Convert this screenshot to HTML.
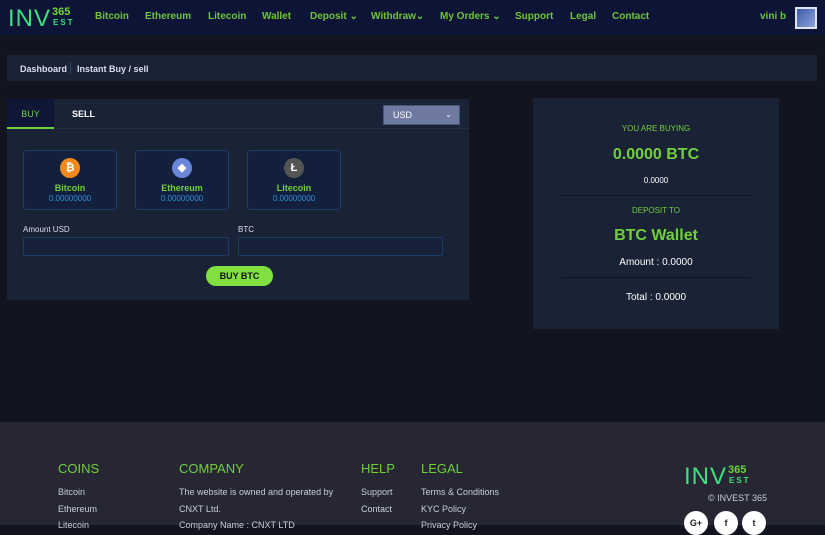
<!DOCTYPE html>
<html><head><meta charset="utf-8"><style>
*{box-sizing:border-box;margin:0;padding:0}
body{width:825px;height:525px;overflow:hidden;background:#12141f;font-family:"Liberation Sans",sans-serif;color:#fff;position:relative}
.g{color:#72cf3c}
.hdr{position:absolute;left:0;top:0;width:825px;height:35px;background:#0e1436}
.logo{position:absolute;left:8px;top:4px;height:26px}
.logo .i{font-size:24px;letter-spacing:1px;color:#3de07c;font-weight:normal;position:absolute;left:0;top:1px}
.logo .n{position:absolute;left:44px;top:3px;font-size:11px;font-weight:bold;color:#6fd53a;line-height:10px}
.logo .e{position:absolute;left:45px;top:14px;font-size:8px;font-weight:bold;color:#3de07c;letter-spacing:2px}
.nav{position:absolute;top:11px;font-size:10px;font-weight:bold;color:#6fc43e}
.av{position:absolute;left:795px;top:7px;width:22px;height:22px;border:2px solid #dfe3f0;background:linear-gradient(135deg,#3d5aa8,#8aa2d8)}
.bc{position:absolute;left:7px;top:55px;width:810px;height:26px;background:#1a2236;font-size:9px;font-weight:bold;color:#dde}
.panel{position:absolute;left:7px;top:99px;width:462px;height:201px;background:#1a2236}
.tabs{height:30px;border-bottom:1px solid #232d48;position:relative}
.buy{position:absolute;left:0;top:0;width:47px;height:30px;background:#0f1636;border-bottom:2px solid #6fcf3a;color:#72cf3c;font-size:9px;text-align:center;line-height:30px}
.sell{position:absolute;left:65px;top:0;font-size:9px;line-height:30px;font-weight:bold}
.usd{position:absolute;left:376px;top:6px;width:77px;height:20px;background:#6e7aa0;border:1px solid #4a557a;font-size:9px;line-height:18px;padding-left:9px}
.card{position:absolute;top:51px;width:94px;height:60px;background:#12203e;border:1px solid #1f3a64;border-radius:3px;text-align:center}
.card .c{width:20px;height:20px;border-radius:50%;margin:7px auto 0;font-size:11px;line-height:20px;font-weight:bold;color:#fff}
.card .t{font-size:9px;font-weight:bold;color:#72cf3c;margin-top:5px}
.card .v{font-size:8px;color:#2f8fd8;margin-top:1px}
.lbl{position:absolute;top:126px;font-size:8px;color:#dde}
.inp{position:absolute;top:138px;height:19px;border:1px solid #1f3a64;border-radius:2px;background:#18213a}
.btn{position:absolute;left:199px;top:167px;width:67px;height:20px;border-radius:10px;background:#80e040;color:#111;font-size:9px;font-weight:bold;text-align:center;line-height:20px}
.sum{position:absolute;left:533px;top:98px;width:246px;height:231px;background:#1a2236;text-align:center}
.sum div{position:absolute;left:0;width:246px}
.hr{position:absolute;left:29px;width:188px;height:1px;background:#0f1424}
.ft{position:absolute;left:0;top:422px;width:825px;height:103px;background:#262733}
.fh{position:absolute;top:39px;font-size:13px;color:#72cf3c}
.fl{position:absolute;font-size:9px;color:#ccd}
.soc{position:absolute;top:89px;width:24px;height:24px;border-radius:50%;background:#fff;color:#222;font-size:9px;font-weight:bold;text-align:center;line-height:24px}
</style></head><body>
<div class="hdr">
 <div class="logo"><span class="i">INV</span><span class="n">365</span><span class="e">EST</span></div>
 <span class="nav" style="left:95px">Bitcoin</span>
 <span class="nav" style="left:145px">Ethereum</span>
 <span class="nav" style="left:208px">Litecoin</span>
 <span class="nav" style="left:262px">Wallet</span>
 <span class="nav" style="left:310px">Deposit ⌄</span>
 <span class="nav" style="left:371px">Withdraw⌄</span>
 <span class="nav" style="left:440px">My Orders ⌄</span>
 <span class="nav" style="left:515px">Support</span>
 <span class="nav" style="left:570px">Legal</span>
 <span class="nav" style="left:612px">Contact</span>
 <span class="nav" style="left:760px">vini b</span>
 <div class="av"></div>
</div>
<div class="bc"><span style="position:absolute;left:13px;top:9px">Dashboard</span><span style="position:absolute;left:63px;top:7px;width:1px;height:12px;background:#2b4a7a"></span><span style="position:absolute;left:70px;top:9px">Instant Buy / sell</span></div>
<div class="panel">
 <div class="tabs"><div class="buy">BUY</div><div class="sell">SELL</div><div class="usd">USD<span style="position:absolute;right:7px;font-size:8px">⌄</span></div></div>
 <div class="card" style="left:16px"><div class="c" style="background:#f28a1e">₿</div><div class="t">Bitcoin</div><div class="v">0.00000000</div></div>
 <div class="card" style="left:128px"><div class="c" style="background:#6a86d8">◆</div><div class="t">Ethereum</div><div class="v">0.00000000</div></div>
 <div class="card" style="left:240px"><div class="c" style="background:#555">Ł</div><div class="t">Litecoin</div><div class="v">0.00000000</div></div>
 <div class="lbl" style="left:16px">Amount USD</div><div class="lbl" style="left:231px">BTC</div>
 <div class="inp" style="left:16px;width:206px"></div><div class="inp" style="left:231px;width:205px"></div>
 <div class="btn">BUY BTC</div>
</div>
<div class="sum">
 <div class="g" style="top:26px;font-size:8px">YOU ARE BUYING</div>
 <div class="g" style="top:48px;font-size:16px;font-weight:bold">0.0000 BTC</div>
 <div style="top:78px;font-size:8px">0.0000</div>
 <span class="hr" style="top:97px"></span>
 <div class="g" style="top:108px;font-size:8px">DEPOSIT TO</div>
 <div class="g" style="top:129px;font-size:16px;font-weight:bold">BTC Wallet</div>
 <div style="top:159px;font-size:10px">Amount : 0.0000</div>
 <span class="hr" style="top:179px"></span>
 <div style="top:194px;font-size:10px">Total : 0.0000</div>
</div>
<div class="ft">
 <div class="fh" style="left:58px">COINS</div>
 <div class="fh" style="left:179px">COMPANY</div>
 <div class="fh" style="left:361px">HELP</div>
 <div class="fh" style="left:421px">LEGAL</div>
 <div class="fl" style="left:58px;top:65px">Bitcoin</div><div class="fl" style="left:58px;top:82px">Ethereum</div><div class="fl" style="left:58px;top:98px">Litecoin</div>
 <div class="fl" style="left:179px;top:65px">The website is owned and operated by</div><div class="fl" style="left:179px;top:82px">CNXT Ltd.</div><div class="fl" style="left:179px;top:98px">Company Name : CNXT LTD</div>
 <div class="fl" style="left:361px;top:65px">Support</div><div class="fl" style="left:361px;top:82px">Contact</div>
 <div class="fl" style="left:421px;top:65px">Terms &amp; Conditions</div><div class="fl" style="left:421px;top:82px">KYC Policy</div><div class="fl" style="left:421px;top:98px">Privacy Policy</div>
 <div class="logo" style="left:684px;top:40px"><span class="i">INV</span><span class="n">365</span><span class="e">EST</span></div>
 <div class="fl" style="left:708px;top:71px">© INVEST 365</div>
 <div class="soc" style="left:684px">G+</div><div class="soc" style="left:714px">f</div><div class="soc" style="left:742px">t</div>
</div>
</body></html>
